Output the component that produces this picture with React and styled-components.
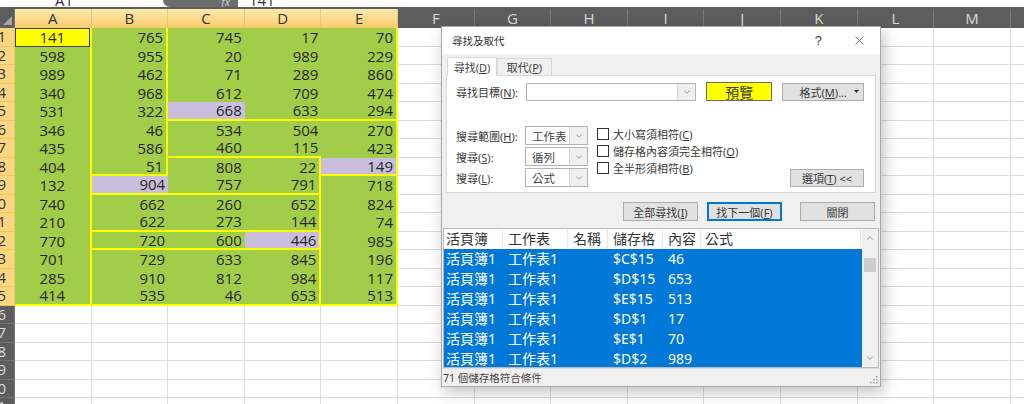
import React from "react";
import styled, { createGlobalStyle } from "styled-components";
import { X, ChevronDown, ChevronUp } from "lucide-react";

const GlobalStyle = createGlobalStyle`
  html, body {
    margin: 0;
    padding: 0;
    background: #ffffff;
  }
  body {
    font-family: "Noto Sans", "Noto Sans CJK TC", sans-serif;
  }
`;

const ROW_H = 18.5;
const COL_W = 76.6;
const UI = `"Noto Sans", "Noto Sans CJK TC", sans-serif`;
const NUM = `"Open Sans", "Liberation Sans", sans-serif`;

const COLS = ["A", "B", "C", "D", "E", "F", "G", "H", "I", "J", "K", "L", "M", "N"];

const DATA = [
  [141, 765, 745, 17, 70],
  [598, 955, 20, 989, 229],
  [989, 462, 71, 289, 860],
  [340, 968, 612, 709, 474],
  [531, 322, 668, 633, 294],
  [346, 46, 534, 504, 270],
  [435, 586, 460, 115, 423],
  [404, 51, 808, 22, 149],
  [132, 904, 757, 791, 718],
  [740, 662, 260, 652, 824],
  [210, 622, 273, 144, 74],
  [770, 720, 600, 446, 985],
  [701, 729, 633, 845, 196],
  [285, 910, 812, 984, 117],
  [414, 535, 46, 653, 513],
];

const LAVENDER = ["5-2", "8-4", "9-1", "12-3"];
// yellow right edges: column -> [fromRow, toRow]
const YELLOW_RIGHT = { 0: [1, 15], 1: [1, 8], 3: [8, 15], 4: [1, 15] };
// yellow bottom edges: row -> columns
const YELLOW_BOTTOM = {
  5: [2, 3, 4],
  7: [2, 3],
  8: [1, 4],
  9: [1, 2, 3],
  11: [1, 2, 3],
  12: [1, 2, 3],
  15: [0, 1, 2, 3, 4],
};

const RESULTS = [
  ["$C$15", "46"],
  ["$D$15", "653"],
  ["$E$15", "513"],
  ["$D$1", "17"],
  ["$E$1", "70"],
  ["$D$2", "989"],
];

const LIST_COLS = [59, 65, 40, 55, 38, 160];

/* ---------- sheet ---------- */

const Page = styled.div`
  position: relative;
  width: 1024px;
  height: 404px;
  overflow: hidden;
  background: #ffffff;
`;

const FormulaBar = styled.div`
  height: 7px;
  display: flex;
  align-items: flex-end;
  overflow: hidden;
  background: #ffffff;
  font-family: ${NUM};
  font-size: 15px;
  color: #333333;
`;

const NameBox = styled.div`
  width: 163px;
  padding-left: 55px;
  box-sizing: border-box;
  line-height: 15px;
  margin-bottom: -1px;
`;

const FxTab = styled.div`
  width: 75px;
  height: 7px;
  background: #6b6b6b;
  border-bottom-left-radius: 7px;
  display: flex;
  justify-content: flex-end;
  align-items: flex-end;
  padding-right: 8px;
  box-sizing: border-box;
  font-style: italic;
  font-size: 11px;
  line-height: 11px;
  color: #cfcfcf;
  overflow: hidden;
`;

const FormulaText = styled.div`
  padding-left: 11px;
  line-height: 15px;
  margin-bottom: -1px;
`;

const HeaderRow = styled.div`
  display: flex;
  height: 21px;
  padding-top: 2px;
  box-sizing: border-box;
  background: #5d5d5d;
`;

const Corner = styled.div`
  flex: 0 0 15px;
  display: flex;
  align-items: flex-end;
  justify-content: flex-end;
  padding: 0 2px 3px 0;
  box-sizing: border-box;
  border-right: 1px solid #777777;
`;

const CornerMark = styled.span`
  width: 9px;
  height: 9px;
  background: #a5a5a5;
  clip-path: polygon(100% 0, 100% 100%, 0 100%);
`;

const ColHead = styled.div`
  flex: 0 0 ${COL_W}px;
  box-sizing: border-box;
  display: flex;
  align-items: center;
  justify-content: center;
  font-family: ${NUM};
  font-size: 15px;
  line-height: 17px;
  color: ${(p) => (p.$active ? "#333333" : "#d9d9d9")};
  background: ${(p) =>
    p.$active ? "linear-gradient(#fde9ae, #f8cd6b)" : "#5d5d5d"};
  border-right: 1px solid ${(p) => (p.$active ? "#e9c777" : "#7a7a7a")};
`;

const GridRow = styled.div`
  display: flex;
  height: ${ROW_H}px;
`;

const RowHead = styled.div`
  flex: 0 0 15px;
  box-sizing: border-box;
  overflow: hidden;
  display: flex;
  align-items: center;
  justify-content: flex-end;
  padding-right: 8px;
  font-family: ${NUM};
  font-size: 15px;
  line-height: 17px;
  white-space: nowrap;
  color: ${(p) => (p.$active ? "#333333" : "#dadada")};
  background: ${(p) => (p.$active ? "#fcd680" : "#5d5d5d")};
  border-bottom: 1px solid ${(p) => (p.$active ? "#f3c466" : "#707070")};
  border-right: 1px solid ${(p) => (p.$active ? "#e9c777" : "#777777")};
`;

const Cell = styled.div`
  flex: 0 0 ${COL_W}px;
  box-sizing: border-box;
  display: flex;
  align-items: center;
  justify-content: ${(p) => (p.$center ? "center" : "flex-end")};
  padding: 0 3px;
  font-family: ${NUM};
  font-size: 15px;
  line-height: 16px;
  color: #262626;
  background: ${(p) => p.$bg};
  border-right: ${(p) =>
    p.$yr ? "2px solid #ffff00" : p.$filled ? "none" : "1px solid #dcdcdc"};
  border-bottom: ${(p) =>
    p.$yb ? "2px solid #ffff00" : p.$filled ? "none" : "1px solid #dcdcdc"};
  box-shadow: ${(p) => (p.$sel ? "inset 0 0 0 1px #3b3b3b" : "none")};
`;

/* ---------- dialog ---------- */

const Dialog = styled.div`
  position: absolute;
  left: 441px;
  top: 26px;
  width: 440px;
  height: 361px;
  box-sizing: border-box;
  border: 1px solid #a8a8a8;
  background: #f0f0f0;
  box-shadow: 3px 5px 14px rgba(0, 0, 0, 0.25);
  display: flex;
  flex-direction: column;
  font-family: ${UI};
  font-size: 11px;
  color: #3a3a3a;
`;

const TitleBar = styled.div`
  height: 27px;
  flex: 0 0 27px;
  background: #ffffff;
  display: flex;
  align-items: center;
  padding: 0 13px 0 10px;
  font-size: 10.5px;
  color: #333333;
`;

const TitleText = styled.div`
  flex: 1;
`;

const TitleIcons = styled.div`
  display: flex;
  align-items: center;
  gap: 30px;
  font-family: "Liberation Sans", sans-serif;
  font-size: 13px;
  color: #444444;
`;

const FindArea = styled.div`
  padding: 3px 4px 0 4px;
  display: flex;
  flex-direction: column;
`;

const Tabs = styled.div`
  display: flex;
  align-items: flex-end;
  height: 19px;
  padding-left: 1px;
`;

const Tab = styled.div`
  width: ${(p) => p.$w}px;
  height: ${(p) => (p.$active ? 19 : 18)}px;
  box-sizing: border-box;
  display: flex;
  align-items: center;
  justify-content: center;
  background: ${(p) => (p.$active ? "#ffffff" : "#f0f0f0")};
  border: 1px solid #d9d9d9;
  border-bottom: ${(p) => (p.$active ? "none" : "1px solid #d9d9d9")};
  position: relative;
  z-index: ${(p) => (p.$active ? 1 : 0)};
  color: #444444;
`;

const Panel = styled.div`
  height: 118px;
  box-sizing: border-box;
  margin-top: -1px;
  background: #ffffff;
  border: 1px solid #d9d9d9;
  padding: 6px 11px 5px 9px;
  display: flex;
  flex-direction: column;
`;

const FindRow = styled.div`
  display: flex;
  align-items: center;
  height: 19px;
`;

const Label = styled.div`
  width: ${(p) => p.$w}px;
  flex: 0 0 ${(p) => p.$w}px;
  white-space: nowrap;
`;

const Combo = styled.div`
  width: ${(p) => p.$w}px;
  height: ${(p) => p.$h}px;
  box-sizing: border-box;
  border: 1px solid #b4b4b4;
  background: #ffffff;
  display: flex;
  align-items: stretch;
`;

const ComboText = styled.div`
  flex: 1;
  display: flex;
  align-items: center;
  padding-left: 6px;
  font-size: 11.5px;
  color: #444444;
`;

const ComboArrow = styled.div`
  width: 17px;
  display: flex;
  align-items: center;
  justify-content: center;
  background: #efefef;
  border-left: 1px solid #d4d4d4;
  color: #606060;
`;

const Button = styled.div`
  width: ${(p) => p.$w}px;
  height: ${(p) => p.$h || 19}px;
  box-sizing: border-box;
  display: flex;
  align-items: center;
  justify-content: ${(p) => (p.$right ? "flex-end" : "center")};
  gap: 7px;
  padding-right: ${(p) => (p.$right ? 4 : 0)}px;
  margin-left: ${(p) => p.$ml || 0}px;
  background: ${(p) => p.$bg || "#e1e1e1"};
  border: 1px solid ${(p) => p.$border || "#adadad"};
  box-shadow: ${(p) => (p.$focus ? "inset 0 0 0 1px #0078d7" : "none")};
  font-size: ${(p) => p.$fs || 11}px;
  color: #3a3a3a;
  white-space: nowrap;
`;

const DropMark = styled.span`
  width: 5px;
  height: 3px;
  background: #333333;
  clip-path: polygon(0 0, 100% 0, 50% 100%);
`;

const OptionsArea = styled.div`
  display: flex;
  margin-top: 25px;
`;

const SelectGroup = styled.div`
  display: flex;
  flex-direction: column;
  gap: 2px;
`;

const SelectRow = styled.div`
  display: flex;
  align-items: center;
  height: 19px;
`;

const CheckGroup = styled.div`
  display: flex;
  flex-direction: column;
  margin-left: 9px;
  margin-top: -1px;
`;

const CheckRow = styled.div`
  display: flex;
  align-items: center;
  height: 17px;
  gap: 4px;
  white-space: nowrap;
`;

const CheckBox = styled.span`
  width: 12px;
  height: 12px;
  box-sizing: border-box;
  border: 1px solid #333333;
  background: #ffffff;
`;

const OptionsButton = styled(Button)`
  align-self: flex-end;
  margin-left: auto;
`;

const ActionRow = styled.div`
  display: flex;
  justify-content: flex-end;
  margin: 9px 1px 0 0;
`;

const ResultList = styled.div`
  margin: 7px 1px 0 1px;
  height: 140px;
  box-sizing: border-box;
  border: 1px solid #b9b9b9;
  background: #ffffff;
  display: flex;
  overflow: hidden;
`;

const ListMain = styled.div`
  flex: 1;
  overflow: hidden;
  display: flex;
  flex-direction: column;
`;

const ListRow = styled.div`
  display: flex;
  flex: 0 0 20px;
  height: 20px;
  font-size: 14px;
  line-height: 18px;
  color: ${(p) => (p.$sel ? "#ffffff" : "#333333")};
  background: ${(p) => (p.$sel ? "#0078d7" : "#ffffff")};
`;

const ListCell = styled.div`
  width: ${(p) => p.$w}px;
  flex: 0 0 ${(p) => p.$w}px;
  box-sizing: border-box;
  display: flex;
  align-items: center;
  padding-left: ${(p) => p.$pl}px;
  white-space: nowrap;
  border-right: ${(p) => (p.$head ? "1px solid #e8e8e8" : "none")};
`;

const ScrollBar = styled.div`
  flex: 0 0 16px;
  background: #f0f0f0;
  display: flex;
  flex-direction: column;
  align-items: center;
  color: #606060;
`;

const ScrollArrow = styled.div`
  height: 18px;
  display: flex;
  align-items: center;
  justify-content: center;
`;

const ScrollThumb = styled.div`
  width: 12px;
  height: 14px;
  margin-top: 11px;
  background: #cdcdcd;
`;

const ScrollSpace = styled.div`
  flex: 1;
`;

const StatusBar = styled.div`
  flex: 1;
  display: flex;
  align-items: center;
  justify-content: space-between;
  padding: 0 2px 0 1px;
  border-top: 1px solid #dcdcdc;
  font-size: 10.5px;
  color: #444444;
`;

const Grip = styled.svg`
  align-self: flex-end;
  margin-bottom: 2px;
`;

function Sheet() {
  const rows = [];
  for (let r = 1; r <= 21; r++) {
    const active = r <= 15;
    const cells = COLS.map((c, ci) => {
      const val = active && ci < 5 ? DATA[r - 1][ci] : null;
      const filled = val !== null;
      const lav = LAVENDER.includes(`${r}-${ci}`);
      const sel = r === 1 && ci === 0;
      const yrRange = YELLOW_RIGHT[ci];
      const yr = filled && yrRange && r >= yrRange[0] && r <= yrRange[1];
      const yb = filled && (YELLOW_BOTTOM[r] || []).includes(ci);
      const bg = sel ? "#ffff00" : lav ? "#c9bfdc" : filled ? "#a2cd48" : "#ffffff";
      return (
        <Cell
          key={c}
          $bg={bg}
          $filled={filled}
          $center={ci === 0}
          $yr={yr}
          $yb={yb}
          $sel={sel}
        >
          {val}
        </Cell>
      );
    });
    rows.push(
      <GridRow key={r}>
        <RowHead $active={active}>{r}</RowHead>
        {cells}
      </GridRow>
    );
  }

  return (
    <>
      <FormulaBar>
        <NameBox>A1</NameBox>
        <FxTab>fx</FxTab>
        <FormulaText>141</FormulaText>
      </FormulaBar>
      <HeaderRow>
        <Corner>
          <CornerMark />
        </Corner>
        {COLS.map((c, i) => (
          <ColHead key={c} $active={i < 5}>
            {c}
          </ColHead>
        ))}
      </HeaderRow>
      {rows}
    </>
  );
}

function SelectField({ label, keyChar, value }) {
  return (
    <SelectRow>
      <Label $w={69}>
        {label}(<u>{keyChar}</u>):
      </Label>
      <Combo $w={63} $h={19}>
        <ComboText>{value}</ComboText>
        <ComboArrow>
          <ChevronDown size={10} strokeWidth={1.4} />
        </ComboArrow>
      </Combo>
    </SelectRow>
  );
}

function CheckField({ label, keyChar }) {
  return (
    <CheckRow>
      <CheckBox />
      <span>
        {label}(<u>{keyChar}</u>)
      </span>
    </CheckRow>
  );
}

function FindDialog() {
  const heads = ["活頁簿", "工作表", "名稱", "儲存格", "內容", "公式"];
  const pads = [2, 5, 5, 5, 5, 4];
  return (
    <Dialog>
      <TitleBar>
        <TitleText>尋找及取代</TitleText>
        <TitleIcons>
          <span>?</span>
          <X size={15} strokeWidth={1.1} />
        </TitleIcons>
      </TitleBar>

      <FindArea>
        <Tabs>
          <Tab $active $w={50}>
            <span>
              尋找(<u>D</u>)
            </span>
          </Tab>
          <Tab $w={55}>
            <span>
              取代(<u>P</u>)
            </span>
          </Tab>
        </Tabs>
        <Panel>
          <FindRow>
            <Label $w={70}>
              尋找目標(<u>N</u>):
            </Label>
            <Combo $w={171} $h={18}>
              <ComboText />
              <ComboArrow>
                <ChevronDown size={10} strokeWidth={1.4} />
              </ComboArrow>
            </Combo>
            <Button $w={66} $ml={10} $bg="#ffff00" $border="#6a6a6a" $fs={14}>
              預覽
            </Button>
            <Button $w={82} $h={18} $ml={10} $right>
              <span>
                格式(<u>M</u>)...
              </span>
              <DropMark />
            </Button>
          </FindRow>

          <OptionsArea>
            <SelectGroup>
              <SelectField label="搜尋範圍" keyChar="H" value="工作表" />
              <SelectField label="搜尋" keyChar="S" value="循列" />
              <SelectField label="搜尋" keyChar="L" value="公式" />
            </SelectGroup>

            <CheckGroup>
              <CheckField label="大小寫須相符" keyChar="C" />
              <CheckField label="儲存格內容須完全相符" keyChar="O" />
              <CheckField label="全半形須相符" keyChar="B" />
            </CheckGroup>

            <OptionsButton $w={74} $h={18}>
              <span>
                選項(<u>T</u>) &lt;&lt;
              </span>
            </OptionsButton>
          </OptionsArea>
        </Panel>

        <ActionRow>
          <Button $w={75}>
            <span>
              全部尋找(<u>I</u>)
            </span>
          </Button>
          <Button $w={75} $ml={9} $border="#0078d7" $focus>
            <span>
              找下一個(<u>F</u>)
            </span>
          </Button>
          <Button $w={75} $ml={18}>
            關閉
          </Button>
        </ActionRow>
      </FindArea>

      <ResultList>
        <ListMain>
          <ListRow>
            {heads.map((h, i) => (
              <ListCell key={h} $w={LIST_COLS[i]} $pl={pads[i]} $head>
                {h}
              </ListCell>
            ))}
          </ListRow>
          {RESULTS.map(([cell, val]) => (
            <ListRow key={cell} $sel>
              <ListCell $w={LIST_COLS[0]} $pl={2}>
                活頁簿1
              </ListCell>
              <ListCell $w={LIST_COLS[1]} $pl={5}>
                工作表1
              </ListCell>
              <ListCell $w={LIST_COLS[2]} $pl={5} />
              <ListCell $w={LIST_COLS[3]} $pl={5}>
                {cell}
              </ListCell>
              <ListCell $w={LIST_COLS[4]} $pl={5}>
                {val}
              </ListCell>
              <ListCell $w={LIST_COLS[5]} $pl={4} />
            </ListRow>
          ))}
        </ListMain>
        <ScrollBar>
          <ScrollArrow>
            <ChevronUp size={10} strokeWidth={1.5} />
          </ScrollArrow>
          <ScrollThumb />
          <ScrollSpace />
          <ScrollArrow>
            <ChevronDown size={10} strokeWidth={1.5} />
          </ScrollArrow>
        </ScrollBar>
      </ResultList>

      <StatusBar>
        <span>71 個儲存格符合條件</span>
        <Grip width="9" height="9" viewBox="0 0 9 9">
          <g fill="#a0a0a0">
            <rect x="7" y="1" width="1.5" height="1.5" />
            <rect x="4" y="4" width="1.5" height="1.5" />
            <rect x="7" y="4" width="1.5" height="1.5" />
            <rect x="1" y="7" width="1.5" height="1.5" />
            <rect x="4" y="7" width="1.5" height="1.5" />
            <rect x="7" y="7" width="1.5" height="1.5" />
          </g>
        </Grip>
      </StatusBar>
    </Dialog>
  );
}

export default function App() {
  return (
    <Page>
      <GlobalStyle />
      <Sheet />
      <FindDialog />
    </Page>
  );
}
